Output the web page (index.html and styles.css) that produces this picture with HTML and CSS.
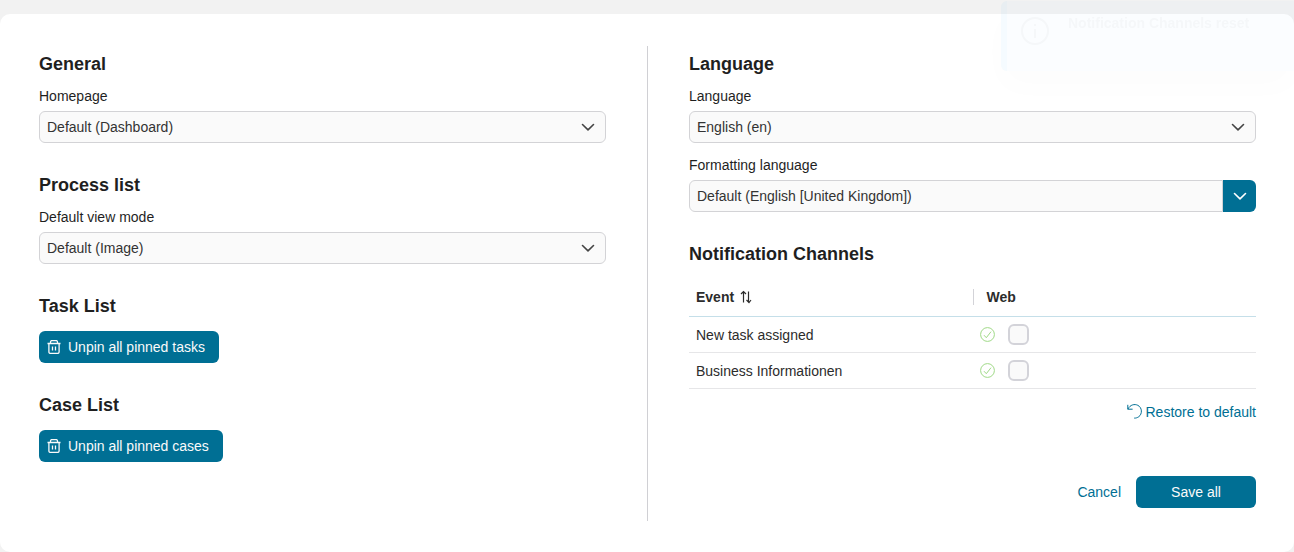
FILE: index.html
```html
<!DOCTYPE html>
<html lang="en">
<head>
    <meta charset="UTF-8">
    <meta name="viewport" content="width=device-width, initial-scale=1.0">
    <title>My Profile</title>
    <link rel="stylesheet" href="styles.css">
</head>
<body>

<form class="profile-card">
    <div class="column">
        <section>
            <h2>General</h2>
            <label for="homepage">Homepage</label>
            <div class="select-box">
                <select id="homepage">
                    <option>Default (Dashboard)</option>
                </select>
                <svg class="chevron" viewBox="0 0 14 14"><path d="M1.500 4.500L7 9.800l5.500-5.300"/></svg>
            </div>
        </section>

        <section>
            <h2>Process list</h2>
            <label for="view-mode">Default view mode</label>
            <div class="select-box">
                <select id="view-mode">
                    <option>Default (Image)</option>
                </select>
                <svg class="chevron" viewBox="0 0 14 14"><path d="M1.500 4.500L7 9.800l5.500-5.300"/></svg>
            </div>
        </section>

        <section>
            <h2>Task List</h2>
            <button type="button" class="btn btn-icon">
                <svg class="trash" viewBox="0 0 14 14"><path d="M0.500 3.500h13M3.500 3.500v-1.500a1.400 1.400 0 0 1 1.400-1.400h4.200a1.400 1.400 0 0 1 1.400 1.400v1.500M1.900 3.500v8.500a1.400 1.400 0 0 0 1.400 1.400h7.400a1.400 1.400 0 0 0 1.400-1.400V3.500M5.500 6.500v4M8.500 6.500v4"/></svg>
                Unpin all pinned tasks
            </button>
        </section>

        <section>
            <h2>Case List</h2>
            <button type="button" class="btn btn-icon">
                <svg class="trash" viewBox="0 0 14 14"><path d="M0.500 3.500h13M3.500 3.500v-1.500a1.400 1.400 0 0 1 1.400-1.400h4.200a1.400 1.400 0 0 1 1.400 1.400v1.500M1.900 3.500v8.500a1.400 1.400 0 0 0 1.400 1.400h7.400a1.400 1.400 0 0 0 1.400-1.400V3.500M5.500 6.500v4M8.500 6.500v4"/></svg>
                Unpin all pinned cases
            </button>
        </section>
    </div>

    <div class="divider"></div>

    <div class="column">
        <section>
            <h2>Language</h2>
            <label for="language">Language</label>
            <div class="select-box">
                <select id="language">
                    <option>English (en)</option>
                </select>
                <svg class="chevron" viewBox="0 0 14 14"><path d="M1.500 4.500L7 9.800l5.500-5.300"/></svg>
            </div>
            <label for="formatting" class="next-label">Formatting language</label>
            <div class="combo">
                <input type="text" id="formatting" value="Default (English [United Kingdom])">
                <button type="button" class="combo-btn" aria-label="Show languages">
                    <svg class="chevron" viewBox="0 0 14 14"><path d="M1.500 4.500L7 9.800l5.500-5.300"/></svg>
                </button>
            </div>
        </section>

        <section>
            <h2>Notification Channels</h2>
            <table class="channels">
                <thead>
                    <tr>
                        <th>
                            <span class="sortable">Event
                                <svg class="sort" viewBox="0 0 12 14"><path d="M3.500 12.500V1.500M1 4l2.500-2.500L6 4M8.500 1.500v11M6.500 10l2.500 2.500L11 10"/></svg>
                            </span>
                        </th>
                        <th class="web"><span>Web</span></th>
                    </tr>
                </thead>
                <tbody>
                    <tr>
                        <td>New task assigned</td>
                        <td>
                            <div class="channel">
                                <svg class="check" viewBox="0 0 15 15"><circle cx="7.500" cy="7.500" r="6.900"/><path d="M4 8.200l2.300 2.500 4.700-6"/></svg>
                                <input type="checkbox" aria-label="Web: New task assigned">
                            </div>
                        </td>
                    </tr>
                    <tr>
                        <td>Business Informationen</td>
                        <td>
                            <div class="channel">
                                <svg class="check" viewBox="0 0 15 15"><circle cx="7.500" cy="7.500" r="6.900"/><path d="M4 8.200l2.300 2.500 4.700-6"/></svg>
                                <input type="checkbox" aria-label="Web: Business Informationen">
                            </div>
                        </td>
                    </tr>
                </tbody>
            </table>
            <div class="restore">
                <a href="#">
                    <svg class="undo" viewBox="0 0 15 15"><path d="M0.800 0.800v4.400h4.800M0.800 5.200C3.300 0.600 7.500-0.300 10.800 1.300c4.600 2.300 4.600 8.800 1 11.400-1.400 1-3 1.500-4.600 1.400"/></svg>
                    Restore to default
                </a>
            </div>
        </section>

        <div class="actions">
            <a href="#">Cancel</a>
            <button type="submit" class="btn btn-save">Save all</button>
        </div>
    </div>
</form>

<div class="toast" role="status">
    <svg class="info" viewBox="0 0 28 28"><circle cx="14" cy="14" r="13"/><path d="M14 12v9M14 7v2"/></svg>
    <strong>Notification Channels reset</strong>
</div>

</body>
</html>
```
FILE: styles.css
```css
* {
    box-sizing: border-box;
}

body {
    margin: 0;
    padding-top: 14px;
    background-color: #f2f2f2;
    color: #1f1f1f;
    font-family: "Liberation Sans", Arial, sans-serif;
    font-size: 14px;
    line-height: 16px;
}

.profile-card {
    display: grid;
    grid-template-columns: 1fr 1px 1fr;
    column-gap: 41px;
    padding: 32px 38px 31px 39px;
    background-color: white;
    border-radius: 10px;
}

.column {
    display: flex;
    flex-direction: column;
    gap: 31px;
    padding: 7px 0 13px;
    min-width: 0;
}

.divider {
    background-color: #d0d0d4;
}

h2 {
    margin: 0 0 13px;
    font-size: 18px;
    line-height: 22px;
}

label {
    display: block;
    margin-bottom: 7px;
}

.next-label {
    margin-top: 14px;
}

svg {
    fill: none;
    stroke: currentColor;
    flex: none;
}

/* form fields */
.select-box {
    display: grid;
    align-items: center;
}

.select-box select,
.select-box .chevron {
    grid-area: 1 / 1;
}

.select-box .chevron {
    justify-self: end;
    margin-right: 11px;
    pointer-events: none;
}

select,
.combo input {
    width: 100%;
    height: 32px;
    padding: 0 7px;
    appearance: none;
    background-color: #fafafa;
    border: 1px solid #d3d3d6;
    border-radius: 6px;
    color: #333;
    font: inherit;
}

.chevron {
    width: 14px;
    height: 14px;
    color: #444;
    stroke-width: 1.6;
    stroke-linecap: round;
    stroke-linejoin: round;
}

.combo {
    display: flex;
}

.combo input {
    flex: 1;
    min-width: 0;
    border-radius: 6px 0 0 6px;
}

.combo-btn {
    display: flex;
    align-items: center;
    justify-content: center;
    width: 33px;
    padding: 0;
    background-color: #006f94;
    border: none;
    border-radius: 0 6px 6px 0;
    cursor: pointer;
}

.combo-btn .chevron {
    color: white;
}

/* buttons and links */
.btn {
    height: 32px;
    background-color: #006f94;
    border: none;
    border-radius: 6px;
    color: #fafafa;
    font: inherit;
    cursor: pointer;
}

.btn-icon {
    display: flex;
    align-items: center;
    gap: 7px;
    margin-top: 14px;
    padding: 0 14px 0 8px;
}

.btn-save {
    width: 120px;
}

.trash {
    width: 14px;
    height: 14px;
    stroke-width: 1.3;
}

a {
    color: #006f94;
    text-decoration: none;
}

/* notification channels */
.channels {
    width: 100%;
    table-layout: fixed;
    border-spacing: 0;
}

.channels th,
.channels td {
    padding: 0 7px;
    text-align: left;
    color: #2c2c2c;
}

.channels th {
    height: 39px;
    border-bottom: 1px solid #c5dfe9;
}

.channels td {
    height: 36px;
    border-bottom: 1px solid #e6e6e8;
}

.channels .web {
    padding-left: 0;
}

.web span {
    display: block;
    padding-left: 13px;
    border-left: 1px solid #d3d3d8;
}

.sortable {
    display: flex;
    align-items: center;
    gap: 6px;
}

.sort {
    width: 12px;
    height: 14px;
    stroke-width: 1.2;
}

.channel {
    display: flex;
    align-items: center;
    gap: 13px;
}

.check {
    width: 15px;
    height: 15px;
    color: #9fd986;
}

.channel input {
    appearance: none;
    width: 21px;
    height: 21px;
    margin: 0;
    background-color: #fafafa;
    border: 2px solid #d3d3d9;
    border-radius: 6px;
}

.channel input:checked {
    background-color: #006f94;
}

.restore {
    display: flex;
    justify-content: flex-end;
    margin-top: 15px;
}

.restore a {
    display: flex;
    gap: 3px;
}

.undo {
    width: 15px;
    height: 15px;
}

.actions {
    display: flex;
    align-items: center;
    justify-content: flex-end;
    gap: 15px;
    margin-top: auto;
    padding-top: 25px;
}

/* toast, almost faded out */
.toast {
    position: fixed;
    top: 1px;
    right: 0;
    display: flex;
    align-items: flex-start;
    gap: 19px;
    width: 293px;
    height: 70px;
    padding: 14px;
    background-color: #afd7ff;
    border-left: 6px solid #3faff0;
    border-radius: 6px 0 0 6px;
    box-shadow: 0 16px 32px rgba(0, 0, 0, 0.25);
    color: #375f87;
    opacity: 0.05;
    pointer-events: none;
}

.info {
    width: 28px;
    height: 28px;
    margin-top: 2px;
    stroke-width: 2;
}
```
